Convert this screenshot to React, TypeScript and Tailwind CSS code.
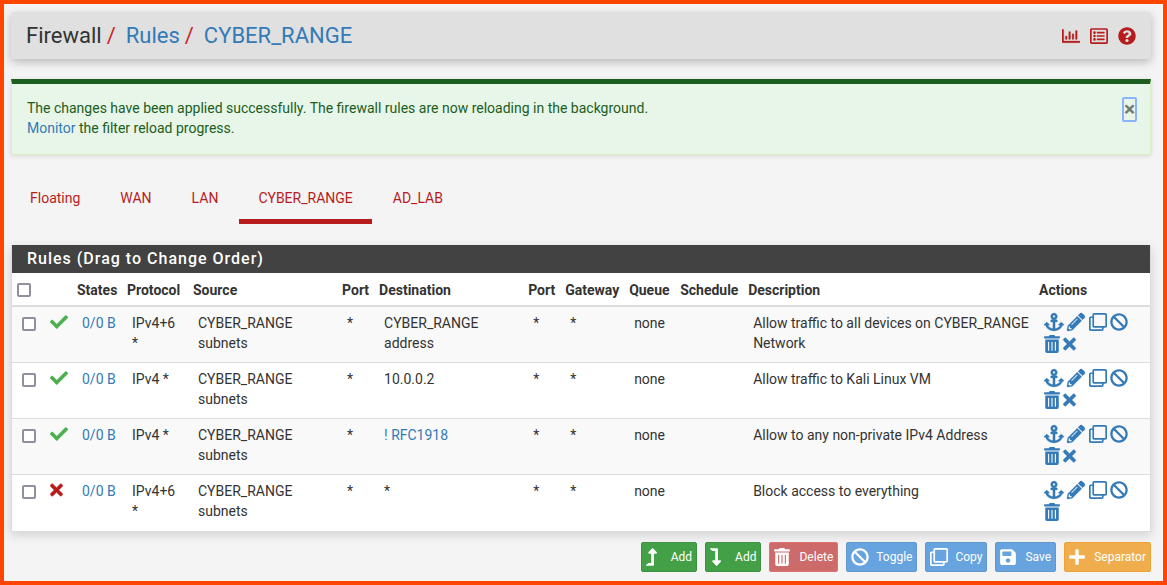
import type { IconType } from 'react-icons';
import {
  FaAnchor,
  FaBan,
  FaCheck,
  FaLevelDownAlt,
  FaLevelUpAlt,
  FaPencilAlt,
  FaPlus,
  FaQuestionCircle,
  FaRegChartBar,
  FaRegClone,
  FaRegListAlt,
  FaSave,
  FaTimes,
  FaTrashAlt,
} from 'react-icons/fa';

type Rule = {
  pass: boolean;
  protocol: string;
  destination: string;
  destinationIsAlias?: boolean;
  description: string;
  removable: boolean;
};

const rules: Rule[] = [
  { pass: true, protocol: 'IPv4+6 *', destination: 'CYBER_RANGE address', description: 'Allow traffic to all devices on CYBER_RANGE Network', removable: true },
  { pass: true, protocol: 'IPv4 *', destination: '10.0.0.2', description: 'Allow traffic to Kali Linux VM', removable: true },
  { pass: true, protocol: 'IPv4 *', destination: '! RFC1918', destinationIsAlias: true, description: 'Allow to any non-private IPv4 Address', removable: true },
  { pass: false, protocol: 'IPv4+6 *', destination: '*', description: 'Block access to everything', removable: false },
];

const tabs = ['Floating', 'WAN', 'LAN', 'CYBER_RANGE', 'AD_LAB'];

const headings = ['States', 'Protocol', 'Source', 'Port', 'Destination', 'Port', 'Gateway', 'Queue', 'Schedule', 'Description', 'Actions'];

const columns = [
  'w-[28px]', 'w-[32px]', 'w-[50px]', 'w-[66px]', 'w-[13.1%]', 'w-[37px]', 'w-[13.1%]',
  'w-[37px]', 'w-[64px]', 'w-[51px]', 'w-[68px]', '', 'w-[116px]',
];

const green = 'bg-[#43a047] border-[#3c9040]';
const red = 'bg-[#cd6a6a] border-[#df7373]';
const blue = 'bg-[#67a3de] border-[#6199ce]';
const orange = 'bg-[#f0ad4e] border-[#eea236]';

const buttons: { label: string; icon: IconType; width: string; color: string }[] = [
  { label: 'Add', icon: FaLevelUpAlt, width: 'w-[11px]', color: green },
  { label: 'Add', icon: FaLevelDownAlt, width: 'w-[11px]', color: green },
  { label: 'Delete', icon: FaTrashAlt, width: 'w-4', color: red },
  { label: 'Toggle', icon: FaBan, width: 'w-[18px]', color: blue },
  { label: 'Copy', icon: FaRegClone, width: 'w-[18px]', color: blue },
  { label: 'Save', icon: FaSave, width: 'w-4', color: blue },
  { label: 'Separator', icon: FaPlus, width: 'w-4', color: orange },
];

function Checkbox({ label }: { label: string }) {
  return (
    <input
      type="checkbox"
      aria-label={label}
      className="mt-1 block size-3.5 appearance-none rounded-[2px] border-2 border-[#8f8f9d] bg-white checked:bg-[#337ab7]"
    />
  );
}

function Action({ icon: Icon, label, look = 'w-[18px]' }: { icon: IconType; label: string; look?: string }) {
  return (
    <a href="#" aria-label={label} className="inline-block align-top">
      <Icon className={`h-[18px] overflow-visible ${look}`} />
    </a>
  );
}

function RuleRow({ rule, index }: { rule: Rule; index: number }) {
  return (
    <tr className="h-14 border-t border-[#dddddd] align-top odd:bg-[#f9f9f9] first:border-t-2 *:pt-1.5 *:pr-[5px] *:pb-[5px] *:pl-2.5">
      <td><Checkbox label={`Select rule ${index + 1}`} /></td>
      <td>
        {rule.pass ? (
          <FaCheck aria-label="Pass" className="size-[18px] text-[#4caf50]" />
        ) : (
          <FaTimes aria-label="Block" className="h-[18px] w-[13px] overflow-visible stroke-[14] text-[#b71c1c]" />
        )}
      </td>
      <td className="whitespace-nowrap"><a href="#" className="text-[#337ab7]">0/0 B</a></td>
      <td>{rule.protocol}</td>
      <td>CYBER_RANGE subnets</td>
      <td>*</td>
      <td>
        {rule.destinationIsAlias ? <a href="#" className="text-[#337ab7]">{rule.destination}</a> : rule.destination}
      </td>
      <td>*</td>
      <td>*</td>
      <td>none</td>
      <td></td>
      <td>{rule.description}</td>
      <td className="leading-[22px] text-[#337ab7]">
        <Action icon={FaAnchor} label="Anchor" look="w-5 stroke-[8]" />{' '}
        <Action icon={FaPencilAlt} label="Edit" look="w-[18px] stroke-[8]" />{' '}
        <Action icon={FaRegClone} label="Copy" />{' '}
        <Action icon={FaBan} label="Disable" />{' '}
        <Action icon={FaTrashAlt} label="Delete" look="w-4" />{' '}
        {rule.removable && <Action icon={FaTimes} label="Kill states" look="w-[13px] stroke-[14]" />}
      </td>
    </tr>
  );
}

export default function App() {
  return (
    <div className="min-h-screen border-4 border-[#ff4500] bg-[#f4f4f4] pt-2 pr-3 pb-2 pl-[7px] font-['Roboto',sans-serif] text-[14px] leading-5 text-[#333333]">
      <header className="flex h-[47px] items-center justify-between rounded-[2px] bg-[#e0e0e0] px-[15px] shadow-[0_3px_10px_rgba(0,0,0,0.25)]">
        <nav aria-label="Breadcrumb" className="flex items-center text-[22px] text-[#337ab7]">
          <span className="text-[#333333]">Firewall</span>
          <span className="pr-2.5 pl-[5px] text-[#c62828]">/</span>
          <a href="#">Rules</a>
          <span className="pr-2.5 pl-[5px] text-[#c62828]">/</span>
          <a href="#">CYBER_RANGE</a>
        </nav>
        <div className="flex items-center gap-2.5 text-[#b71c1c]">
          <a href="#" aria-label="Status"><FaRegChartBar className="size-[18px] stroke-[8]" /></a>
          <a href="#" aria-label="Logs"><FaRegListAlt className="size-[18px]" /></a>
          <a href="#" aria-label="Help"><FaQuestionCircle className="size-[18px]" /></a>
        </div>
      </header>

      <div role="alert" className="mt-5 flex items-start justify-between border border-t-[5px] border-[#dcedc8] border-t-[#1b5e20] bg-[#e8f5e9] px-[15px] pt-3.5 pb-4 text-[#1b5e20] shadow-[0_1px_5px_rgba(0,0,0,0.12)]">
        <p>
          The changes have been applied successfully. The firewall rules are now reloading in the background.
          <br />
          <a href="#" className="text-[#337ab7]">Monitor</a> the filter reload progress.
        </p>
        <button
          type="button"
          aria-label="Close"
          className="-mt-px -mr-0.5 flex h-[25px] w-[15px] items-center justify-center rounded-[2px] border-2 border-[#8ab4f8] text-[21px] leading-none font-bold text-[#747a74]"
        >
          ×
        </button>
      </div>

      <nav aria-label="Interfaces" className="mt-[18px] flex gap-0.5 text-[#b71c1c]">
        {tabs.map((tab) => (
          <a
            key={tab}
            href="#"
            aria-current={tab === 'CYBER_RANGE' ? 'page' : undefined}
            className="border-b-[5px] border-transparent px-[19px] pt-[15px] pb-[11px] aria-[current=page]:border-[#b71c1c]"
          >
            {tab}
          </a>
        ))}
      </nav>

      <section className="mt-[21px] border border-t-0 border-[#dddddd] bg-white shadow-[0_3px_10px_rgba(0,0,0,0.15)]">
        <h2 className="bg-[#424242] px-[15px] py-1 text-[16px] font-medium tracking-[1px] text-white">
          Rules (Drag to Change Order)
        </h2>
        <table className="w-full table-fixed border-collapse">
          <colgroup>
            {columns.map((width, i) => <col key={i} className={width} />)}
          </colgroup>
          <thead>
            <tr className="text-left align-top *:px-[5px] *:pt-[7px] *:pb-[5px]">
              <td><div className="-mt-px"><Checkbox label="Select all rules" /></div></td>
              <td></td>
              {headings.map((heading, i) => <th key={i} className="font-bold">{heading}</th>)}
            </tr>
          </thead>
          <tbody>
            {rules.map((rule, i) => <RuleRow key={i} rule={rule} index={i} />)}
          </tbody>
        </table>
      </section>

      <div className="mt-2.5 flex flex-wrap justify-end gap-2">
        {buttons.map(({ label, icon: Icon, width, color }, i) => (
          <button key={i} type="button" className={`flex h-[30px] items-center rounded-[2px] border px-1 text-[12px] text-white ${color}`}>
            <span className="w-[25px]"><Icon className={`h-[18px] ${width}`} /></span>
            {label}
          </button>
        ))}
      </div>
    </div>
  );
}
